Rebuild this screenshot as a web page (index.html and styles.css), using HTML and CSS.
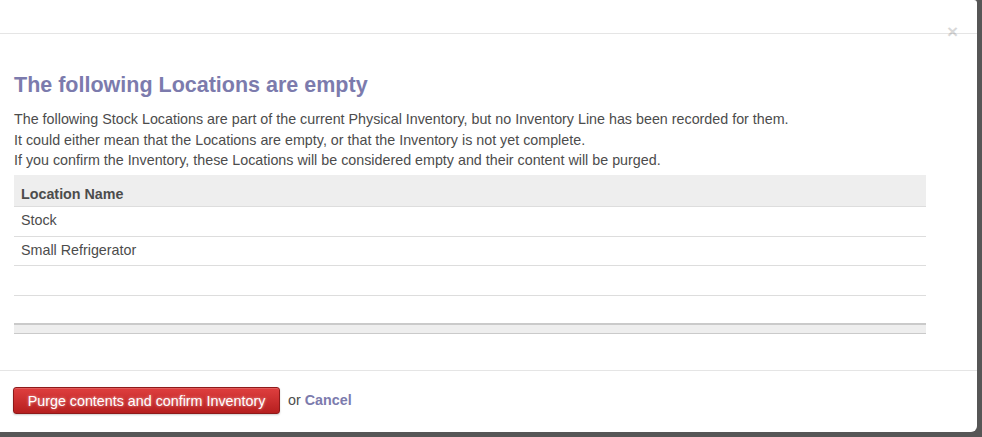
FILE: index.html
```html
<!DOCTYPE html>
<html>
<head>
<meta charset="utf-8">
<link rel="stylesheet" href="styles.css">
</head>
<body>
<div class="modal">
  <div class="modal-header">
    <span class="close">×</span>
  </div>
  <div class="modal-body">
    <h2 class="title">The following Locations are empty</h2>
    <p class="desc">The following Stock Locations are part of the current Physical Inventory, but no Inventory Line has been recorded for them.<br>It could either mean that the Locations are empty, or that the Inventory is not yet complete.<br>If you confirm the Inventory, these Locations will be considered empty and their content will be purged.</p>
    <table class="grid">
      <thead><tr><th>Location Name</th></tr></thead>
      <tbody>
        <tr><td>Stock</td></tr>
        <tr class="short"><td>Small Refrigerator</td></tr>
        <tr><td>&nbsp;</td></tr>
        <tr class="last"><td>&nbsp;</td></tr>
      </tbody>
      <tfoot><tr><td></td></tr></tfoot>
    </table>
  </div>
  <div class="modal-footer">
    <button class="btn-primary">Purge contents and confirm Inventory</button>
    <span class="or">or</span>
    <a class="cancel">Cancel</a>
  </div>
</div>
</body>
</html>
```
FILE: styles.css
```css
html, body {
  margin: 0;
  padding: 0;
  background: #565656;
  font-family: "Liberation Sans", Arial, sans-serif;
  color: #4c4c4c;
}
.modal {
  width: 977px;
  height: 432px;
  background: #fff;
  display: flex;
  flex-direction: column;
  position: relative;
  border-radius: 0 3px 6px 0;
}
.modal-header {
  height: 33px;
  border-bottom: 1px solid #e5e5e5;
  position: relative;
}
.close {
  position: absolute;
  right: 19px;
  top: 22px;
  font-size: 19px;
  font-weight: bold;
  line-height: 1;
  color: #000;
  opacity: 0.15;
}
.modal-body {
  flex: 1;
  padding: 0 14px;
}
.title {
  margin: 38px 0 0 0;
  font-size: 21.5px;
  line-height: 26px;
  font-weight: bold;
  color: #7c7bad;
}
.desc {
  margin: 11px 0 4px;
  font-size: 14.3px;
  line-height: 20.5px;
}
.grid {
  width: 912px;
  border-collapse: collapse;
  font-size: 14.3px;
}
.grid th {
  text-align: left;
  vertical-align: bottom;
  background: #eeeeee;
  height: 32px;
  box-sizing: border-box;
  padding: 0 7px 3px;
  border-bottom: 1px solid #dddddd;
  font-weight: bold;
  line-height: 18px;
}
.grid td {
  height: 30px;
  padding: 0 7px;
  vertical-align: top;
  padding-top: 4px;
  box-sizing: border-box;
  border-bottom: 1px solid #dddddd;
  line-height: 18px;
}
.grid tbody tr.short td {
  height: 29px;
}
.grid tbody tr.last td {
  border-bottom: none;
  height: 28px;
}
.grid tfoot td {
  height: 10px;
  padding: 0;
  background: #eeeeee;
  border-top: 2px solid #cacaca;
  border-bottom: 1px solid #cacaca;
}
.modal-footer {
  border-top: 1px solid #e5e5e5;
  height: 62px;
  display: flex;
  align-items: flex-start;
  padding: 16px 13px 0;
  box-sizing: border-box;
}
.btn-primary {
  height: 27px;
  width: 267px;
  padding: 0;
  font-family: "Liberation Sans", Arial, sans-serif;
  font-size: 14.3px;
  color: #fff;
  background: linear-gradient(#df3f3f, #b61f1f);
  border: 1px solid #8e1a1a;
  border-radius: 3px;
  box-shadow: 0 1px 2px rgba(0,0,0,0.2), inset 0 1px 0 rgba(255,255,255,0.15);
  text-shadow: 0 0 3px rgba(255,255,255,0.6);
}
.or {
  margin-left: 8px;
  font-size: 14.3px;
  line-height: 27px;
  color: #4c4c4c;
}
.cancel {
  margin-left: 4px;
  font-size: 14.3px;
  line-height: 27px;
  font-weight: bold;
  color: #7c7bad;
}
```
